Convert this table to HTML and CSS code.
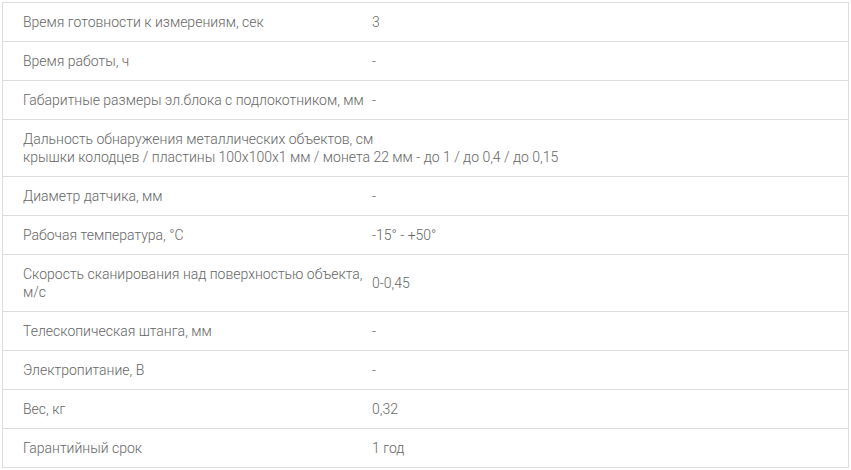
FILE: index.html
```html
<!DOCTYPE html>
<html lang="ru">
<head>
<meta charset="utf-8">
<link rel="stylesheet" href="styles.css">
</head>
<body>
<table class="specs">
  <tbody>
    <tr><td class="label">Время готовности к измерениям, сек</td><td class="value">3</td></tr>
    <tr><td class="label">Время работы, ч</td><td class="value">-</td></tr>
    <tr><td class="label">Габаритные размеры эл.блока с подлокотником, мм</td><td class="value">-</td></tr>
    <tr><td class="label wide" colspan="2">Дальность обнаружения металлических объектов, см<br>крышки колодцев / пластины 100х100х1 мм / монета 22 мм - до 1 / до 0,4 / до 0,15</td></tr>
    <tr><td class="label">Диаметр датчика, мм</td><td class="value">-</td></tr>
    <tr><td class="label">Рабочая температура, °С</td><td class="value">-15° - +50°</td></tr>
    <tr><td class="label">Скорость сканирования над поверхностью объекта, м/с</td><td class="value">0-0,45</td></tr>
    <tr><td class="label">Телескопическая штанга, мм</td><td class="value">-</td></tr>
    <tr><td class="label">Электропитание, В</td><td class="value">-</td></tr>
    <tr><td class="label">Вес, кг</td><td class="value">0,32</td></tr>
    <tr><td class="label">Гарантийный срок</td><td class="value">1 год</td></tr>
  </tbody>
</table>
</body>
</html>
```
FILE: styles.css
```css
html, body {
  margin: 0;
  padding: 0;
  background: #fff;
}
body {
  padding: 2px;
  font-family: Roboto, "Liberation Sans", Arial, sans-serif;
  font-size: 14px;
  font-weight: 300;
  line-height: 18px;
  color: #666;
}
.specs {
  width: 847px;
  border-collapse: collapse;
  table-layout: fixed;
  border: 1px solid #ddd;
}
.specs td {
  border-top: 1px solid #ddd;
  border-bottom: 1px solid #ddd;
  padding: 10px 0;
  vertical-align: middle;
  text-align: left;
}
.specs td.label {
  width: 349px;
  padding-left: 20px;
  padding-right: 0;
}
.specs td.value {
  padding-left: 0;
  padding-right: 10px;
}
```
